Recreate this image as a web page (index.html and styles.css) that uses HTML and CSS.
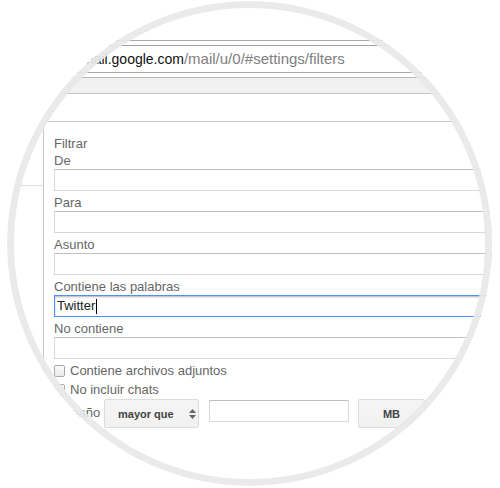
FILE: index.html
```html
<!DOCTYPE html>
<html lang="es">
<head>
  <meta charset="UTF-8">
  <title>Filtros - Gmail</title>
  <link rel="stylesheet" href="styles.css">
</head>
<body>
  <div class="lens">
    <div class="tabbar"></div>
    <div class="rule"></div>
    <div class="omnibox">
      <span class="host">mail.google.com</span><span class="path">/mail/u/0/#settings/filters</span>
    </div>
    <div class="bookmarks"></div>
    <div class="blank"></div>

    <div class="workspace">
      <div class="side"><div class="side-rule"></div></div>
      <div class="panel">
        <div class="title">Filtrar</div>

        <div class="field">
          <div class="label">De</div>
          <div class="box"></div>
        </div>
        <div class="field">
          <div class="label">Para</div>
          <div class="box"></div>
        </div>
        <div class="field">
          <div class="label">Asunto</div>
          <div class="box"></div>
        </div>
        <div class="field">
          <div class="label">Contiene las palabras</div>
          <div class="box focus">Twitter<span class="caret"></span></div>
        </div>
        <div class="field">
          <div class="label">No contiene</div>
          <div class="box"></div>
        </div>

        <div class="checks">
          <div class="check-row"><span class="check"></span>Contiene archivos adjuntos</div>
          <div class="check-row"><span class="check"></span>No incluir chats</div>
        </div>

        <div class="size-row">
          <div class="size-label">Tamaño</div>
          <div class="btn select">mayor que
            <svg class="updown" width="7" height="12" viewBox="0 0 7 12">
              <polygon points="0,5 3.5,1 7,5" fill="#666"/>
              <polygon points="0,7 3.5,11 7,7" fill="#666"/>
            </svg>
          </div>
          <div class="box size-box"></div>
          <div class="btn unit">MB</div>
        </div>
      </div>
    </div>
  </div>
</body>
</html>
```

FILE: styles.css
```css
html, body {
  margin: 0; padding: 0;
  background: #fff;
  overflow: hidden;
}
body {
  font-family: "Liberation Sans", Arial, sans-serif;
  width: 500px; height: 488px;
}

/* magnifier circle */
.lens {
  width: 485px; height: 485px;
  margin: 1px 0 0 7px;
  border-radius: 50%;
  overflow: hidden;
  position: relative;
  background: #fff;
}
.lens::after {
  content: "";
  position: absolute; left: 0; top: 0; right: 0; bottom: 0;
  border-radius: 50%;
  border: 7px solid rgba(232, 232, 232, .93);
  pointer-events: none;
}

/* browser chrome */
.tabbar { height: 39px; }
.rule { height: 1px; background: #a9a9a9; }
.omnibox {
  margin-top: 4px;
  height: 26px; line-height: 26px;
  border-top: 1px solid #a3a3a3;
  border-bottom: 1px solid #a8a8a8;
  padding-left: 75px;
  font-size: 15px;
  white-space: nowrap;
}
.host { color: #111; font-size: 14px; }
.path { color: #808080; }
.bookmarks {
  margin-top: 4px;
  height: 15px;
  background: #f1f1f1;
  border-top: 1px solid #b5b5b5;
  border-bottom: 1px solid #c4c4c4;
}
.blank { height: 27px; }

/* page */
.workspace { display: flex; }
.side { width: 36px; flex: none; }
.side-rule { margin-top: 64px; height: 1px; background: #dedede; }
.panel {
  flex: 1;
  border-left: 1px solid #c8c8c8;
  border-top: 1px solid #c8c8c8;
  padding: 14px 0 0 10px;
  font-size: 13px; color: #666;
  height: 400px;
}
.title { line-height: 16px; margin-bottom: -3px; }
.field { padding-top: 4px; }
.label { line-height: 16px; }
.box {
  box-sizing: border-box;
  height: 22px;
  border: 1px solid #d9d9d9;
  border-top-color: #c0c0c0;
  background: #fff;
}
.box.focus {
  border-color: #4d90fe;
  box-shadow: inset 0 1px 2px rgba(0, 0, 0, .3);
  padding-left: 2px;
  line-height: 20px;
  color: #222;
  display: flex; align-items: center;
}
.caret {
  display: inline-block;
  width: 1px; height: 15px;
  background: #000;
  margin-left: 1px;
}

.checks { padding-top: 2px; }
.check-row {
  display: flex; align-items: center;
  height: 19px;
}
.check {
  box-sizing: border-box;
  width: 11px; height: 12px;
  margin-right: 5px;
  border: 1px solid #a9a9a9;
  border-radius: 2px;
  background: linear-gradient(#fbfbfb, #e9e9e9);
}

.size-row {
  display: flex; align-items: flex-start;
  height: 29px;
}
.size-label { width: 50px; line-height: 28px; }
.btn {
  box-sizing: border-box;
  height: 29px;
  border: 1px solid #dcdcdc;
  border-radius: 2px;
  background: linear-gradient(#f5f5f5, #f1f1f1);
  font-size: 11px; font-weight: bold; color: #444;
  display: flex; align-items: center;
}
.select { width: 95px; padding-left: 13px; }
.updown { margin-left: 15px; }
.size-box { width: 140px; margin: 1px 0 0 10px; }
.unit { width: 67px; margin-left: 9px; justify-content: center; }
```
